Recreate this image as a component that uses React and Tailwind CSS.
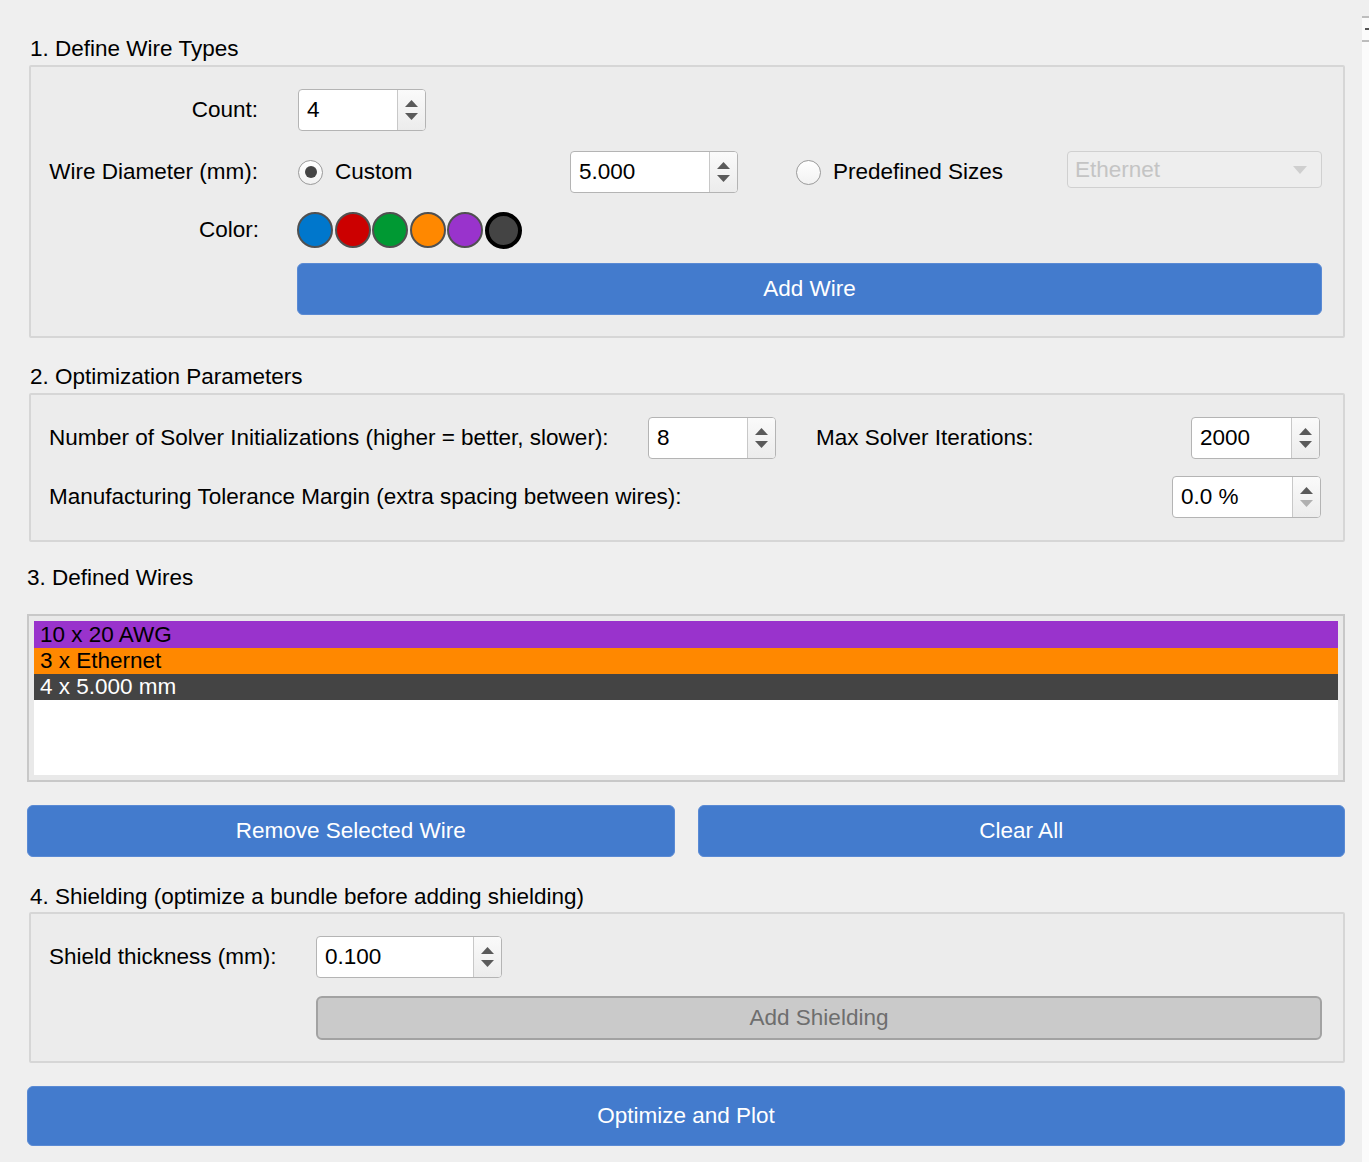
import React from "react";

const FONT = { fontFamily: '"Liberation Sans", Arial, sans-serif' };

function Spin({ value, w, downDisabled = false }) {
  return (
    <div
      className="flex h-[42px] shrink-0 rounded-[4px] border border-[#b4b4b4] bg-white overflow-hidden"
      style={{ width: w }}
    >
      <div className="flex-1 flex items-center pl-[8px] text-[22.5px] text-black leading-none">
        {value}
      </div>
      <div className="w-[28px] border-l border-[#c8c8c8] bg-gradient-to-b from-[#fafafa] to-[#ececec] flex flex-col items-center justify-center gap-[6px]">
        <svg width="13" height="7" viewBox="0 0 13 7">
          <polygon points="6.5,0 13,7 0,7" fill="#5a5a5a" />
        </svg>
        <svg width="13" height="7" viewBox="0 0 13 7">
          <polygon points="0,0 13,0 6.5,7" fill={downDisabled ? "#b0b0b0" : "#5a5a5a"} />
        </svg>
      </div>
    </div>
  );
}

function Radio({ checked, label }) {
  return (
    <div className="flex items-center gap-[12px]">
      <div className="w-[25px] h-[25px] rounded-full border-[1.5px] border-[#9a9a9a] bg-gradient-to-b from-white to-[#f2f2f2] flex items-center justify-center">
        {checked && <div className="w-[12px] h-[12px] rounded-full bg-[#444444]" />}
      </div>
      <span className="text-[22.5px] text-black">{label}</span>
    </div>
  );
}

function Title({ children, className = "" }) {
  return (
    <div className={"h-[26px] leading-[26px] text-[22.5px] text-black whitespace-nowrap " + className}>{children}</div>
  );
}

function BlueButton({ children, className = "" }) {
  return (
    <div
      className={
        "rounded-[6px] bg-[#437bcd] border border-[#5a8ad4] flex items-center justify-center text-white text-[22.5px] " +
        className
      }
    >
      {children}
    </div>
  );
}

const colors = ["#0077cc", "#cc0000", "#009933", "#ff8800", "#9933cc"];

export default function App() {
  return (
    <div className="w-[1369px] h-[1162px] bg-[#efefef] flex overflow-hidden" style={FONT}>
      <div className="ml-[27px] w-[1318px] flex flex-col pt-[36px]">
        {/* Section 1 */}
        <Title className="ml-[3px] mb-[3px]">1. Define Wire Types</Title>
        <div className="ml-[2px] w-[1316px] h-[273px] border-2 border-[#d6d6d6] bg-[#ececec] rounded-[2px] pl-[18px] pr-[21px] pt-[22px] flex flex-col">
          <div className="flex items-center h-[42px]">
            <div className="w-[209px] text-right text-[22.5px] text-black">Count:</div>
            <div className="ml-[40px]">
              <Spin value="4" w={128} />
            </div>
          </div>
          <div className="flex items-center h-[42px] mt-[20px]">
            <div className="w-[209px] text-right text-[22.5px] text-black whitespace-nowrap">Wire Diameter (mm):</div>
            <div className="ml-[40px] w-[272px]">
              <Radio checked label="Custom" />
            </div>
            <Spin value="5.000" w={168} />
            <div className="ml-[58px] w-[271px]">
              <Radio label="Predefined Sizes" />
            </div>
            <div className="flex-1 h-[37px] mb-[5px] rounded-[4px] border border-[#d0d0d0] bg-[#eeeeee] flex items-center pl-[7px] pr-[14px]">
              <span className="flex-1 text-[22.5px] text-[#c4c4c4]">Ethernet</span>
              <svg width="14" height="8" viewBox="0 0 14 8">
                <polygon points="0,0 14,0 7,8" fill="#cfcfcf" />
              </svg>
            </div>
          </div>
          <div className="flex items-center h-[38px] mt-[18px]">
            <div className="w-[210px] text-right text-[22.5px] text-black">Color:</div>
            <div className="ml-[38px] flex gap-[1.5px]">
              {colors.map((c) => (
                <div
                  key={c}
                  className="w-[36px] h-[36px] rounded-full border-2 border-[#505050]"
                  style={{ backgroundColor: c }}
                />
              ))}
              <div className="w-[37px] h-[37px] rounded-full border-[4px] border-black bg-[#444444]" />
            </div>
          </div>
          <BlueButton className="ml-[248px] mt-[14px] h-[52px]">Add Wire</BlueButton>
        </div>

        {/* Section 2 */}
        <Title className="ml-[3px] mt-[26px] mb-[3px]">2. Optimization Parameters</Title>
        <div className="ml-[2px] w-[1316px] h-[149px] border-2 border-[#d6d6d6] bg-[#ececec] rounded-[2px] pl-[18px] pr-[22px] pt-[22px] flex flex-col">
          <div className="flex items-center h-[42px]">
            <div className="w-[599px] text-[22.5px] text-black whitespace-nowrap">
              Number of Solver Initializations (higher = better, slower):
            </div>
            <Spin value="8" w={128} />
            <div className="ml-[40px] text-[22.5px] text-black whitespace-nowrap">Max Solver Iterations:</div>
            <div className="flex-1" />
            <div className="mr-[1px]">
              <Spin value="2000" w={129} />
            </div>
          </div>
          <div className="flex items-center h-[42px] mt-[17px]">
            <div className="text-[22.5px] text-black whitespace-nowrap">
              Manufacturing Tolerance Margin (extra spacing between wires):
            </div>
            <div className="flex-1" />
            <Spin value="0.0 %" w={149} downDisabled />
          </div>
        </div>

        {/* Section 3 */}
        <Title className="mt-[23px] mb-[23px]">3. Defined Wires</Title>
        <div className="w-[1318px] h-[168px] border-2 border-[#c8c8c8] bg-[#e9e9e9] p-[5px]">
          <div className="w-full h-full bg-white flex flex-col">
            <div className="h-[27px] bg-[#9933cc] text-black text-[22.5px] leading-[27px] pl-[6px]">10 x 20 AWG</div>
            <div className="h-[26px] bg-[#ff8800] text-black text-[22.5px] leading-[26px] pl-[6px]">3 x Ethernet</div>
            <div className="h-[26px] bg-[#444444] text-white text-[22.5px] leading-[26px] pl-[6px]">4 x 5.000 mm</div>
          </div>
        </div>
        <div className="grid grid-cols-2 gap-[23px] mt-[23px]">
          <BlueButton className="h-[52px]">Remove Selected Wire</BlueButton>
          <BlueButton className="h-[52px]">Clear All</BlueButton>
        </div>

        {/* Section 4 */}
        <Title className="ml-[3px] mt-[27px] mb-[2px]">4. Shielding (optimize a bundle before adding shielding)</Title>
        <div className="ml-[2px] w-[1316px] h-[151px] border-2 border-[#d6d6d6] bg-[#ececec] rounded-[2px] pl-[18px] pr-[21px] pt-[22px] flex flex-col">
          <div className="flex items-center h-[42px]">
            <div className="w-[267px] text-[22.5px] text-black whitespace-nowrap">Shield thickness (mm):</div>
            <Spin value="0.100" w={186} />
          </div>
          <div className="ml-[267px] mt-[18px] h-[44px] rounded-[6px] border-2 border-[#a2a2a2] bg-[#cacaca] flex items-center justify-center text-[22.5px] text-[#6e6e6e]">
            Add Shielding
          </div>
        </div>

        <BlueButton className="mt-[23px] h-[60px]">Optimize and Plot</BlueButton>
      </div>

      <div className="ml-[17px] w-[7px] mt-[16px] bg-[#fbfbfb] flex flex-col">
        <div className="h-[2px] bg-[#bdbdbd]" />
        <div className="h-[22px] flex items-center justify-end">
          <div className="w-[4px] h-[2px] bg-[#555]" />
        </div>
        <div className="h-[2px] bg-[#bdbdbd]" />
      </div>
    </div>
  );
}
